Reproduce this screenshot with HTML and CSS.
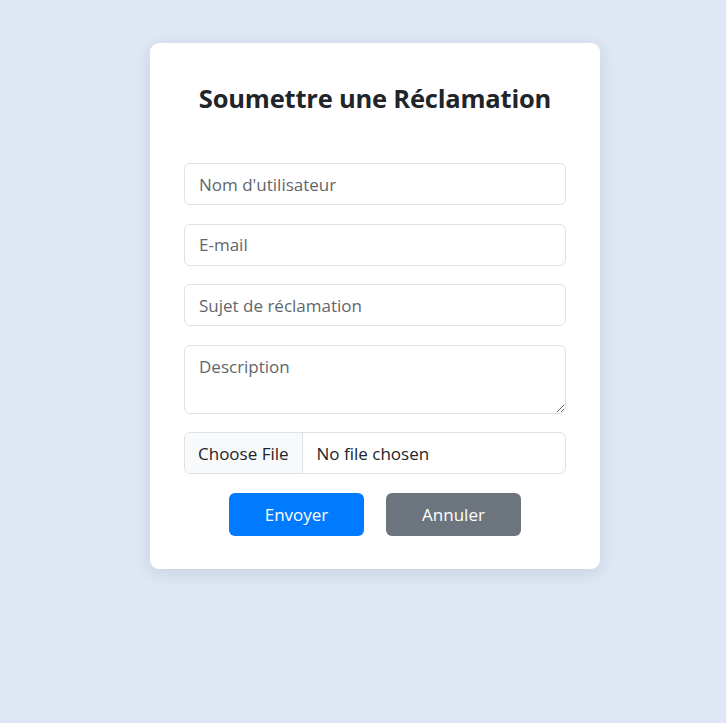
FILE: index.html
```html
<!DOCTYPE html>
<html lang="fr">
<head>
<meta charset="utf-8">
<title>Soumettre une Réclamation</title>
<link rel="stylesheet" href="styles.css">
</head>
<body>
<main class="page">
  <form class="card">
    <h2 class="title">Soumettre une Réclamation</h2>
    <div class="fields">
      <input class="field" type="text" placeholder="Nom d'utilisateur">
      <input class="field" type="email" placeholder="E-mail">
      <input class="field" type="text" placeholder="Sujet de réclamation">
      <textarea class="field area" placeholder="Description"></textarea>
      <div class="file">
        <span class="file-btn">Choose File</span>
        <span class="file-name">No file chosen</span>
      </div>
    </div>
    <div class="actions">
      <button type="button" class="btn btn-primary">Envoyer</button>
      <button type="button" class="btn btn-secondary">Annuler</button>
    </div>
  </form>
</main>
</body>
</html>
```
FILE: styles.css
```css
* { box-sizing: border-box; }
html, body { margin: 0; padding: 0; }
body {
  background: #dee7f3;
  font-family: "Open Sans", "Noto Sans", sans-serif;
  color: #212529;
  min-height: 723px;
}
.page {
  display: flex;
  justify-content: center;
  padding-top: 43px;
  padding-left: 24px;
}
.card {
  width: 450px;
  background: #fff;
  border-radius: 9px;
  box-shadow: 0 4px 16px rgba(30, 60, 110, 0.12);
  padding: 38px 34px 33px;
}
.title {
  margin: 0 0 48px;
  text-align: center;
  font-size: 25.5px;
  font-weight: 700;
  line-height: 34px;
  color: #212529;
  letter-spacing: -0.2px;
}
.fields {
  display: flex;
  flex-direction: column;
  gap: 18.5px;
}
.field {
  display: block;
  width: 100%;
  height: 42px;
  border: 1px solid #dee2e6;
  border-radius: 6px;
  padding: 0 14px;
  font-family: inherit;
  font-size: 17px;
  color: #212529;
  background: #fff;
  outline: none;
}
.field::placeholder { color: #5f666d; opacity: 1; }
.area {
  height: 69px;
  padding-top: 9px;
  resize: vertical;
  line-height: 24px;
}
.file {
  display: flex;
  height: 42px;
  border: 1px solid #dee2e6;
  border-radius: 6px;
  overflow: hidden;
  font-size: 17px;
}
.file-btn {
  display: flex;
  align-items: center;
  padding: 0 13px;
  background: #f8f9fa;
  border-right: 1px solid #dee2e6;
  color: #212529;
}
.file-name {
  display: flex;
  align-items: center;
  padding-left: 14px;
  color: #212529;
}
.actions {
  display: flex;
  justify-content: center;
  gap: 22px;
  margin-top: 18.5px;
}
.btn {
  width: 135px;
  height: 43px;
  border: none;
  border-radius: 6px;
  color: #fff;
  font-family: inherit;
  font-size: 17px;
  cursor: pointer;
}
.btn-primary { background: #007bff; }
.btn-secondary { background: #6c757d; }
```
